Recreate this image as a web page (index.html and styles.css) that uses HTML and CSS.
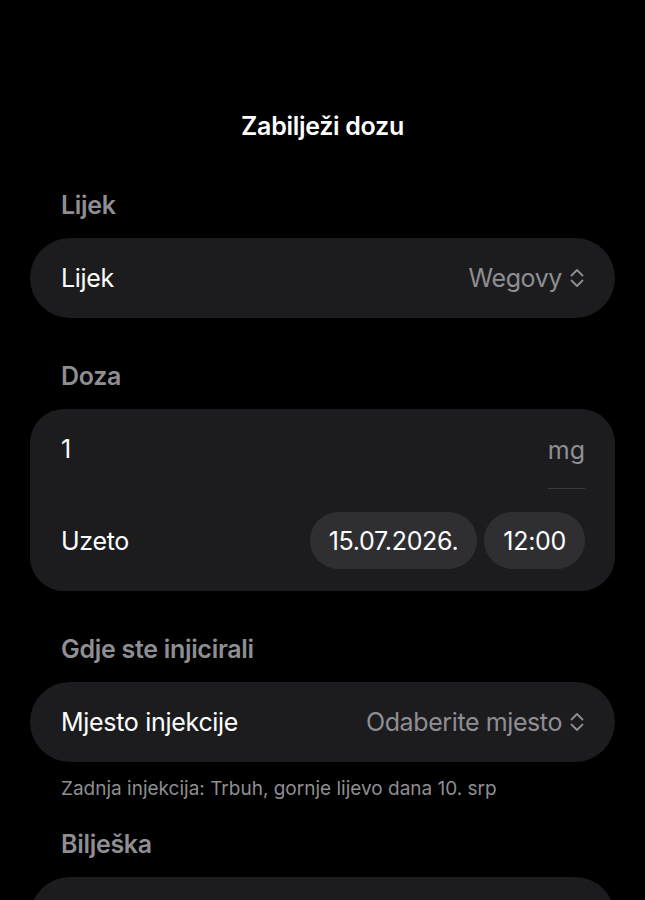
FILE: index.html
```html
<!DOCTYPE html>
<html lang="hr">
<head>
<meta charset="utf-8">
<title>Zabilježi dozu</title>
<link rel="stylesheet" href="styles.css">
</head>
<body>
<main class="screen">
  <h1 class="title">Zabilježi dozu</h1>

  <section class="section">
    <h2 class="label">Lijek</h2>
    <div class="card row">
      <span class="text">Lijek</span>
      <span class="value">Wegovy
        <svg class="chev" viewBox="0 0 14 20" width="14" height="20"><path d="M1.5 7.5 L7 2 L12.5 7.5 M1.5 12.5 L7 18 L12.5 12.5"/></svg>
      </span>
    </div>
  </section>

  <section class="section">
    <h2 class="label">Doza</h2>
    <div class="card dose">
      <div class="dose-row">
        <span class="text">1</span>
        <span class="unit">mg</span>
      </div>
      <div class="taken-row">
        <span class="text">Uzeto</span>
        <div class="pills">
          <span class="pill">15.07.2026.</span>
          <span class="pill">12:00</span>
        </div>
      </div>
    </div>
  </section>

  <section class="section">
    <h2 class="label">Gdje ste injicirali</h2>
    <div class="card row">
      <span class="text">Mjesto injekcije</span>
      <span class="value">Odaberite mjesto
        <svg class="chev" viewBox="0 0 14 20" width="14" height="20"><path d="M1.5 7.5 L7 2 L12.5 7.5 M1.5 12.5 L7 18 L12.5 12.5"/></svg>
      </span>
    </div>
    <p class="note">Zadnja injekcija: Trbuh, gornje lijevo dana 10. srp</p>
  </section>

  <section class="section">
    <h2 class="label">Bilješka</h2>
    <div class="card row"></div>
  </section>
</main>
</body>
</html>
```

FILE: styles.css
```css
html, body {
  margin: 0;
  padding: 0;
  background: #000;
  height: 100%;
  overflow: hidden;
}
body {
  font-family: Inter, "Noto Sans", sans-serif;
  color: #fff;
}
.screen {
  padding: 111px 30px 0 30px;
  display: flex;
  flex-direction: column;
}
.title {
  margin: 0 0 49px;
  font-size: 25px;
  line-height: 30px;
  font-weight: 600;
  text-align: center;
  letter-spacing: -0.3px;
}
.section {
  display: flex;
  flex-direction: column;
  margin-bottom: 43px;
}
.label {
  margin: 0 0 18px 31px;
  font-size: 25px;
  line-height: 30px;
  font-weight: 600;
  color: #8e8e93;
  letter-spacing: -0.3px;
}
.card {
  background: #1c1c1e;
  border-radius: 40px;
}
.row {
  height: 80px;
  display: flex;
  align-items: center;
  justify-content: space-between;
  padding: 0 31px 0 31px;
  box-sizing: border-box;
}
.text {
  font-size: 25px;
  line-height: 30px;
  letter-spacing: -0.3px;
  color: #fff;
}
.value {
  display: flex;
  align-items: center;
  gap: 8px;
  font-size: 25px;
  line-height: 30px;
  letter-spacing: -0.4px;
  color: #8e8e93;
}
.chev {
  fill: none;
  stroke: #8e8e93;
  stroke-width: 1.8;
  stroke-linecap: round;
  stroke-linejoin: round;
}
.dose {
  border-radius: 34px;
  padding: 0 30px 22px 31px;
  display: flex;
  flex-direction: column;
}
.dose-row {
  height: 80px;
  display: flex;
  align-items: center;
  justify-content: space-between;
  position: relative;
}
.dose-row::after {
  content: "";
  position: absolute;
  right: 0;
  bottom: 0;
  width: 37px;
  height: 1px;
  background: #3a3a3c;
}
.unit {
  font-size: 25px;
  line-height: 30px;
  color: #8e8e93;
  padding-top: 2px;
}
.taken-row {
  display: flex;
  align-items: center;
  justify-content: space-between;
  padding-top: 23px;
}
.pills {
  display: flex;
  gap: 7px;
}
.pill {
  height: 57px;
  display: flex;
  align-items: center;
  padding: 0 19px;
  background: #2f2f32;
  border-radius: 29px;
  font-size: 25px;
  letter-spacing: -0.3px;
  color: #fff;
}
.note {
  margin: 15px 0 -15px 31px;
  font-size: 19px;
  line-height: 24px;
  color: #8e8e93;
  letter-spacing: 0;
}
```
